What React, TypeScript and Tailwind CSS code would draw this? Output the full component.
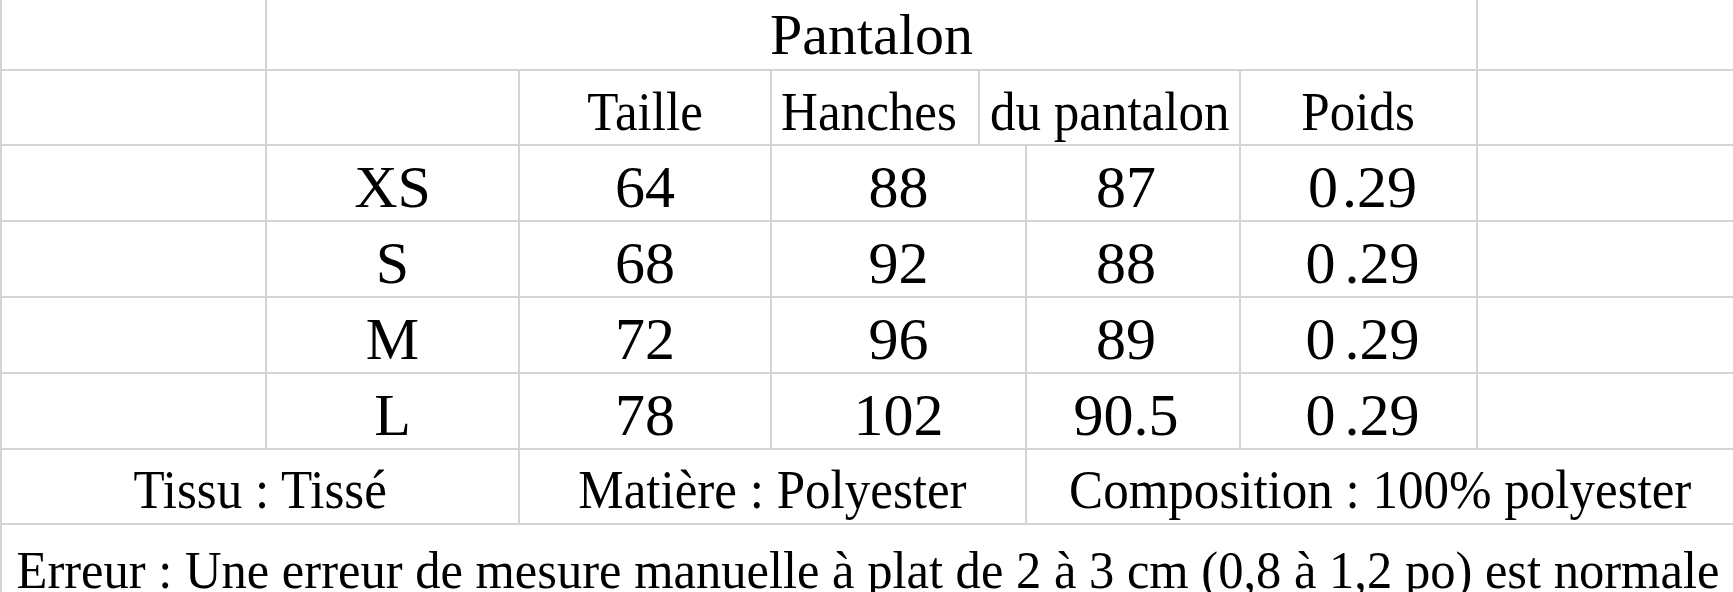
import React from "react";

const serif = { fontFamily: '"Liberation Serif", "Times New Roman", serif' };

function Cell({
  w,
  children,
  className = "",
  last = false,
}: {
  w?: string;
  children?: React.ReactNode;
  className?: string;
  last?: boolean;
}) {
  return (
    <div
      className={`${w ?? ""} ${last ? "flex-1" : "shrink-0 border-r-2 border-[#d4d4d4]"} flex justify-center whitespace-nowrap ${className}`}
    >
      {children}
    </div>
  );
}

function Narrow({ children }: { children: React.ReactNode }) {
  return <span className="inline-block scale-x-[0.945]">{children}</span>;
}

function Zero({ gap }: { gap: string }) {
  return (
    <span>
      <span className={gap}>0</span>.29
    </span>
  );
}

const dataRows = [
  { s: "XS", a: "64", b: "88", c: "87", gap: "mr-[4px]" },
  { s: "S", a: "68", b: "92", c: "88", gap: "mr-[9px]" },
  { s: "M", a: "72", b: "96", c: "89", gap: "mr-[9px]" },
  { s: "L", a: "78", b: "102", c: "90.5", gap: "mr-[9px]" },
];

export default function App() {
  return (
    <div
      className="w-[1733px] h-[592px] overflow-hidden bg-white text-black border-l-2 border-[#d4d4d4] flex flex-col leading-none"
      style={serif}
    >
      {/* Row 1 */}
      <div className="h-[71px] shrink-0 flex border-b-2 border-[#d4d4d4] text-[58px]">
        <Cell w="w-[265px]" />
        <Cell w="w-[1211px]" className="pt-[6px]">
          Pantalon
        </Cell>
        <Cell last />
      </div>

      {/* Row 2 */}
      <div className="h-[75px] shrink-0 flex border-b-2 border-[#d4d4d4] text-[54px]">
        <Cell w="w-[265px]" />
        <Cell w="w-[253px]" />
        <Cell w="w-[252px]" className="pt-[14px]">
          <Narrow>Taille</Narrow>
        </Cell>
        <Cell w="w-[208px]" className="pt-[14px] pr-[12px]">
          <Narrow>Hanches</Narrow>
        </Cell>
        <Cell w="w-[261px]" className="pt-[14px]">
          <Narrow>du pantalon</Narrow>
        </Cell>
        <Cell w="w-[237px]" className="pt-[14px]">
          <Narrow>Poids</Narrow>
        </Cell>
        <Cell last />
      </div>

      {/* Data rows */}
      {dataRows.map((r) => (
        <div
          key={r.s}
          className="h-[76px] shrink-0 flex border-b-2 border-[#d4d4d4] text-[60px]"
        >
          <Cell w="w-[265px]" />
          <Cell w="w-[253px]" className="pt-[11px]">
            {r.s}
          </Cell>
          <Cell w="w-[252px]" className="pt-[11px]">
            {r.a}
          </Cell>
          <Cell w="w-[255px]" className="pt-[11px]">
            {r.b}
          </Cell>
          <Cell w="w-[214px]" className="pt-[11px] pr-[14px]">
            {r.c}
          </Cell>
          <Cell w="w-[237px]" className="pt-[11px] pl-[8px]">
            <Zero gap={r.gap} />
          </Cell>
          <Cell last />
        </div>
      ))}

      {/* Row 7 */}
      <div className="h-[75px] shrink-0 flex border-b-2 border-[#d4d4d4] text-[54px]">
        <Cell w="w-[518px]" className="pt-[13px]">
          <Narrow>Tissu : Tissé</Narrow>
        </Cell>
        <Cell w="w-[507px]" className="pt-[13px]">
          <Narrow>Matière : Polyester</Narrow>
        </Cell>
        <Cell last className="pt-[13px]">
          <Narrow>Composition : 100% polyester</Narrow>
        </Cell>
      </div>

      {/* Row 8 */}
      <div className="flex-1 flex justify-center pt-[19px] text-[53.5px] whitespace-nowrap">
        <Narrow>
          Erreur : Une erreur de mesure manuelle à plat de 2 à 3 cm (0,8 à 1,2 po) est normale
        </Narrow>
      </div>
    </div>
  );
}
